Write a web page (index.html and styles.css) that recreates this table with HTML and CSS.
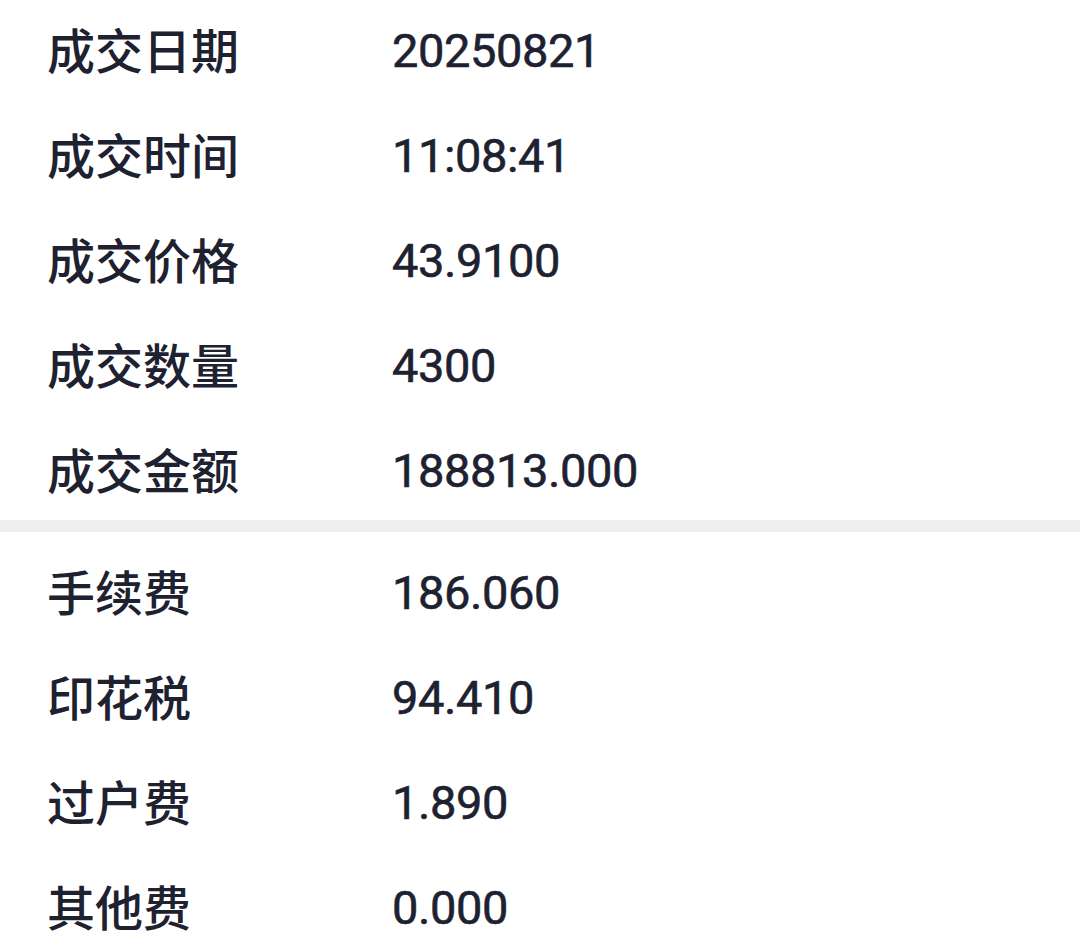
FILE: index.html
```html
<!DOCTYPE html>
<html lang="zh-CN">
<head>
<meta charset="utf-8">
<link rel="stylesheet" href="styles.css">
<title>成交详情</title>
</head>
<body>
<div class="page">
  <section class="group group-top">
    <div class="row"><span class="label">成交日期</span><span class="value">20250821</span></div>
    <div class="row"><span class="label">成交时间</span><span class="value">11:08:41</span></div>
    <div class="row"><span class="label">成交价格</span><span class="value">43.9100</span></div>
    <div class="row"><span class="label">成交数量</span><span class="value">4300</span></div>
    <div class="row"><span class="label">成交金额</span><span class="value">188813.000</span></div>
  </section>
  <div class="divider"></div>
  <section class="group group-bottom">
    <div class="row"><span class="label">手续费</span><span class="value">186.060</span></div>
    <div class="row"><span class="label">印花税</span><span class="value">94.410</span></div>
    <div class="row"><span class="label">过户费</span><span class="value">1.890</span></div>
    <div class="row"><span class="label">其他费</span><span class="value">0.000</span></div>
  </section>
</div>
</body>
</html>
```
FILE: styles.css
```css
html, body {
  margin: 0;
  padding: 0;
  background: #ffffff;
}
body {
  width: 1080px;
  height: 951px;
  overflow: hidden;
  color: #1e2130;
}
.page {
  display: flex;
  flex-direction: column;
}
.group {
  display: flex;
  flex-direction: column;
}
.group-top {
  margin-top: -5px;
}
.group-bottom {
  padding-top: 5px;
}
.row {
  display: grid;
  grid-template-columns: 345px 1fr;
  align-items: center;
  height: 105px;
  padding-left: 47px;
}
.label {
  font-family: "Noto Sans CJK SC", sans-serif;
  font-size: 48px;
  line-height: 1;
  font-weight: 500;
}
.value {
  font-family: Roboto, "Noto Sans", sans-serif;
  font-size: 47px;
  line-height: 1;
  letter-spacing: -0.4px;
  font-weight: 400;
  -webkit-text-stroke: 0.6px #1e2130;
  padding-top: 6px;
}
.divider {
  height: 12px;
  background: #eeeeee;
}
```
